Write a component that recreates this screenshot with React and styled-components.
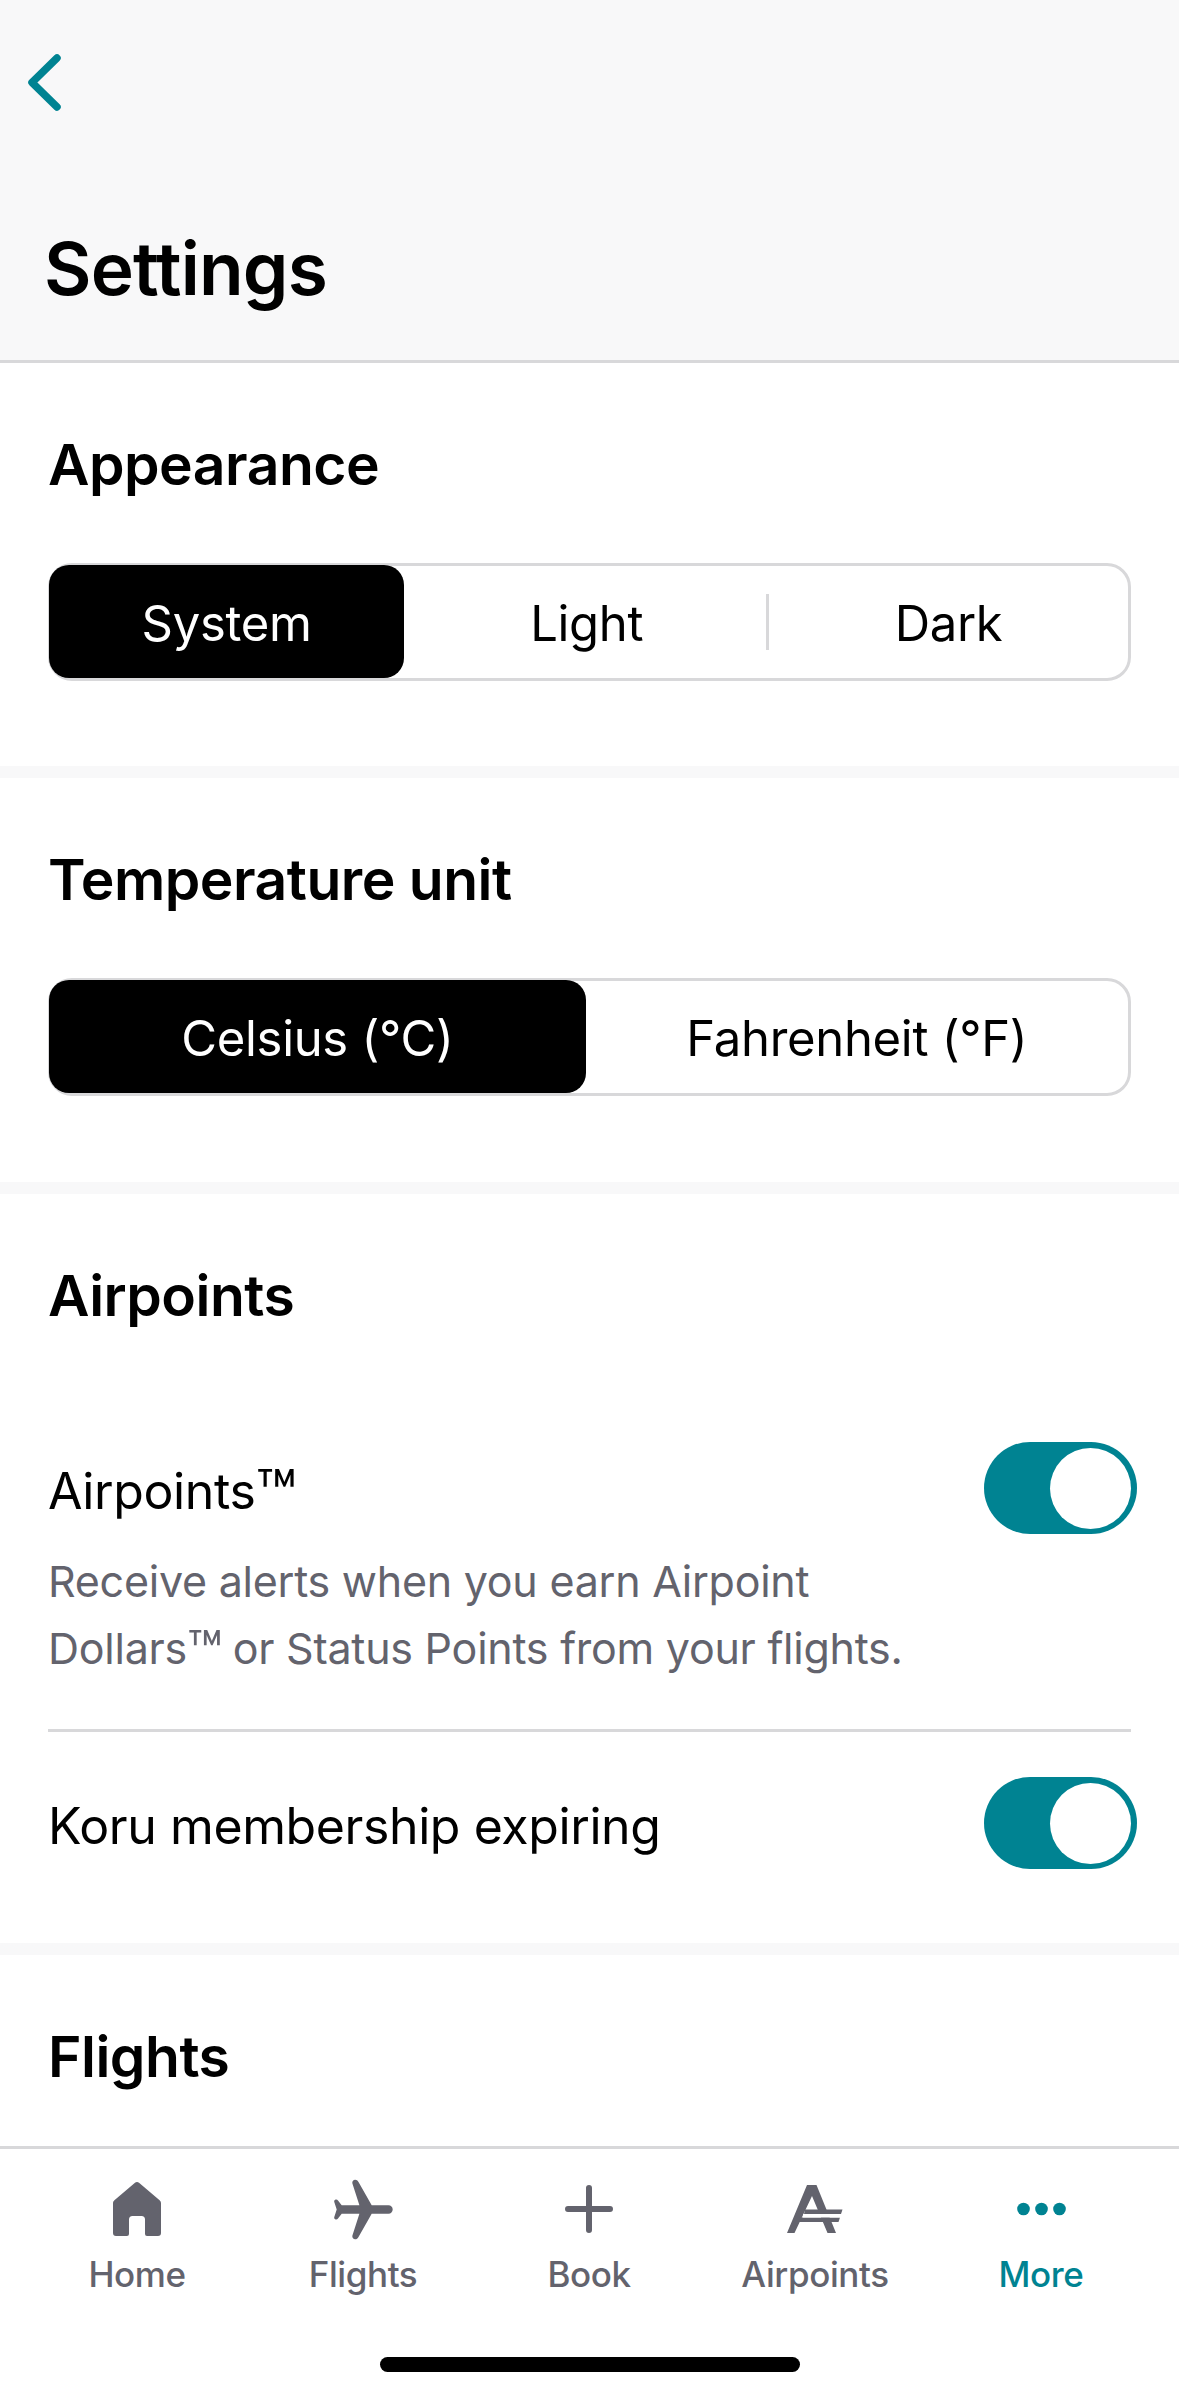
import styled, { createGlobalStyle } from 'styled-components';

const GlobalStyle = createGlobalStyle`
  html, body {
    margin: 0;
    padding: 0;
    background: #ffffff;
  }
  * {
    box-sizing: border-box;
  }
`;

const FONT = `Inter, "Liberation Sans", sans-serif`;
const TEAL = '#008392';
const GREY = '#63636d';

const Screen = styled.div`
  width: 1179px;
  height: 2396px;
  display: flex;
  flex-direction: column;
  overflow: hidden;
  background: #f8f8f9;
  font-family: ${FONT};
  color: #000;
`;

const Header = styled.header`
  height: 363px;
  flex: none;
  padding: 54px 0 0 28px;
  border-bottom: 3px solid #d8d8da;
  display: flex;
  flex-direction: column;
`;

const BackIcon = styled.svg`
  width: 33px;
  height: 57px;
  display: block;
`;

const Title = styled.h1`
  margin: 113px 0 0 16px;
  font-size: 73px;
  line-height: 90px;
  font-weight: 600;
  letter-spacing: -0.8px;
`;

const Content = styled.main`
  flex: 1;
  min-height: 0;
  display: flex;
  flex-direction: column;
  gap: 12px;
  overflow: hidden;
`;

const Section = styled.section`
  background: #fff;
  padding: 67px 48px ${(p) => p.$bottom}px;
  flex: ${(p) => (p.$fill ? 1 : 'none')};
`;

const Heading = styled.h2`
  margin: 0 0 ${(p) => p.$gap}px;
  font-size: 57px;
  line-height: 70px;
  font-weight: 600;
  letter-spacing: -0.5px;
`;

const Segmented = styled.div`
  height: 118px;
  display: flex;
  align-items: center;
  padding: 2px 0;
  border: 3px solid #d8d8da;
  border-radius: 24px;
`;

const Segment = styled.div`
  flex: ${(p) => (p.$active ? 0.99 : 1)} 1 0;
  align-self: stretch;
  display: flex;
  align-items: center;
  justify-content: center;
  padding-top: 3px;
  font-size: 49px;
  letter-spacing: -0.3px;
  border-radius: 20px;
  margin: ${(p) => (p.$active ? '-3px 0 -2px -2px' : '-2px 0')};
  color: ${(p) => (p.$active ? '#fff' : '#000')};
  background: ${(p) => (p.$active ? '#000' : 'transparent')};
`;

const SegmentDivider = styled.div`
  width: 3px;
  height: 56px;
  flex: none;
  background: ${(p) => (p.$hidden ? 'transparent' : '#d8d8da')};
`;

const EdgeDivider = styled(SegmentDivider)`
  width: 2px;
  margin-right: -2px;
`;

const RowHead = styled.div`
  height: 92px;
  display: flex;
  align-items: center;
  justify-content: space-between;
  font-size: 50px;
  letter-spacing: -0.4px;
`;

const RowLabel = styled.span`
  padding-top: 5px;
`;

const Toggle = styled.div`
  width: 153px;
  height: 92px;
  flex: none;
  margin-right: -6px;
  padding: 6px;
  border-radius: 46px;
  background: ${TEAL};
  display: flex;
  justify-content: flex-end;
`;

const Knob = styled.div`
  width: 81px;
  height: 81px;
  border-radius: 50%;
  background: #fff;
`;

const Description = styled.p`
  margin: 14px 0 47px;
  font-size: 43px;
  line-height: 67px;
  color: ${GREY};
  letter-spacing: -0.25px;
`;

const Trademark = styled.span`
  font-size: 1.35em;
  line-height: 0;
  letter-spacing: -1.5px;
  vertical-align: -0.13em;
`;

const Rule = styled.div`
  height: 3px;
  background: #d8d8da;
  margin-bottom: 45px;
`;

const TabBar = styled.nav`
  height: 250px;
  flex: none;
  background: #fff;
  border-top: 3px solid #d8d8da;
  position: relative;
  padding: 0 24px;
  display: grid;
  grid-template-columns: repeat(5, 226px);
`;

const Tab = styled.div`
  display: flex;
  flex-direction: column;
  align-items: center;
  color: ${(p) => (p.$active ? TEAL : GREY)};
`;

const TabIcon = styled.div`
  height: 64px;
  margin-top: 28px;
  display: flex;
  align-items: center;
  justify-content: center;
`;

const TabLabel = styled.span`
  margin-top: 11px;
  font-size: 35px;
  line-height: 44px;
  font-weight: 500;
  letter-spacing: -0.4px;
`;

const HomeIndicator = styled.div`
  position: absolute;
  left: 380px;
  bottom: 24px;
  width: 420px;
  height: 15px;
  border-radius: 8px;
  background: #000;
`;

const HomeGlyph = () => (
  <svg width="48" height="54" viewBox="0 0 48 54" fill="currentColor">
    <path d="M22 .8a3.2 3.2 0 0 1 4 0l20.6 17.4c.9.8 1.4 1.8 1.4 3V51a3 3 0 0 1-3 3H34a2 2 0 0 1-2-2V37.5a3.5 3.5 0 0 0-3.5-3.5h-9a3.5 3.5 0 0 0-3.5 3.5V52a2 2 0 0 1-2 2H3a3 3 0 0 1-3-3V21.2c0-1.2.5-2.2 1.4-3z" />
  </svg>
);

const PlaneGlyph = () => (
  <svg width="60" height="61" viewBox="0 0 60 61" fill="currentColor">
    <path d="M55.5 26.3a4.2 4.2 0 0 1 0 8.4H38.7L25.5 58c-.8 1.5-2 2.3-3.3 2.3-2 0-3.3-1.8-2.8-3.7L26.4 34.700H8.700L5 39.500c-.5.8-1.3 1.1-2.100 1-1.200-.2-1.900-1.200-1.700-2.300L3.700 30.500 1.200 22.800c-.2-1.100.5-2.100 1.700-2.300.8-.1 1.600.2 2.100 1L8.700 26.300H26.400L19.400 4.400C18.900 2.500 20.200.7 22.200.7c1.300 0 2.500.8 3.300 2.300L38.700 26.300Z" />
  </svg>
);

const PlusGlyph = () => (
  <svg width="48" height="48" viewBox="0 0 48 48" fill="none" stroke="currentColor" strokeWidth="6" strokeLinecap="round">
    <path d="M24 3v42M3 24h42" />
  </svg>
);

const AirpointsGlyph = () => (
  <svg width="56" height="48" viewBox="0 0 56 48" fill="currentColor">
    <path d="M20 0h9.500L49 48h-8.500L25 11 7.500 48H0z" />
    <path d="M18 24.500h37.500L54 29H17z" />
    <path d="M13 32.500h40L51.500 37H12z" />
    <path d="M16 29h38v3.500H16z" fill="#fff" />
  </svg>
);

const MoreGlyph = () => (
  <svg width="49" height="14" viewBox="0 0 49 14" fill="currentColor">
    <circle cx="6.500" cy="7" r="6.300" />
    <circle cx="24.500" cy="7" r="6.300" />
    <circle cx="42.500" cy="7" r="6.300" />
  </svg>
);

const tabs = [
  { label: 'Home', Icon: HomeGlyph },
  { label: 'Flights', Icon: PlaneGlyph },
  { label: 'Book', Icon: PlusGlyph },
  { label: 'Airpoints', Icon: AirpointsGlyph },
  { label: 'More', Icon: MoreGlyph, active: true },
];

const SegmentGroup = ({ options, dividers }) => (
  <Segmented>
    {options.map((option, index) => (
      <Segment key={option} $active={index === 0}>
        {option}
      </Segment>
    )).flatMap((node, index) =>
      index === 0 ? [node] : [dividers ? <SegmentDivider key={index} $hidden={index === 1} /> : null, node]
    )}
    <EdgeDivider />
  </Segmented>
);

const App = () => (
  <Screen>
    <GlobalStyle />
    <Header>
      <BackIcon viewBox="0 0 33 57" fill="none" stroke={TEAL} strokeWidth="7.500" strokeLinecap="round" strokeLinejoin="round">
        <path d="M29 4 4 28.500 29 53" />
      </BackIcon>
      <Title>Settings</Title>
    </Header>
    <Content>
      <Section $bottom={85}>
        <Heading $gap={63}>Appearance</Heading>
        <SegmentGroup options={['System', 'Light', 'Dark']} dividers />
      </Section>
      <Section $bottom={86}>
        <Heading $gap={63}>Temperature unit</Heading>
        <SegmentGroup options={['Celsius (°C)', 'Fahrenheit (°F)']} />
      </Section>
      <Section $bottom={74}>
        <Heading $gap={111}>Airpoints</Heading>
        <RowHead>
          <RowLabel>Airpoints<Trademark>™</Trademark></RowLabel>
          <Toggle>
            <Knob />
          </Toggle>
        </RowHead>
        <Description>
          Receive alerts when you earn Airpoint
          <br />
          Dollars<Trademark>™</Trademark> or Status Points from your flights.
        </Description>
        <Rule />
        <RowHead>
          <RowLabel>Koru membership expiring</RowLabel>
          <Toggle>
            <Knob />
          </Toggle>
        </RowHead>
      </Section>
      <Section $bottom={0} $fill>
        <Heading $gap={0}>Flights</Heading>
      </Section>
    </Content>
    <TabBar>
      {tabs.map(({ label, Icon, active }) => (
        <Tab key={label} $active={active}>
          <TabIcon>
            <Icon />
          </TabIcon>
          <TabLabel>{label}</TabLabel>
        </Tab>
      ))}
      <HomeIndicator />
    </TabBar>
  </Screen>
);

export default App;
